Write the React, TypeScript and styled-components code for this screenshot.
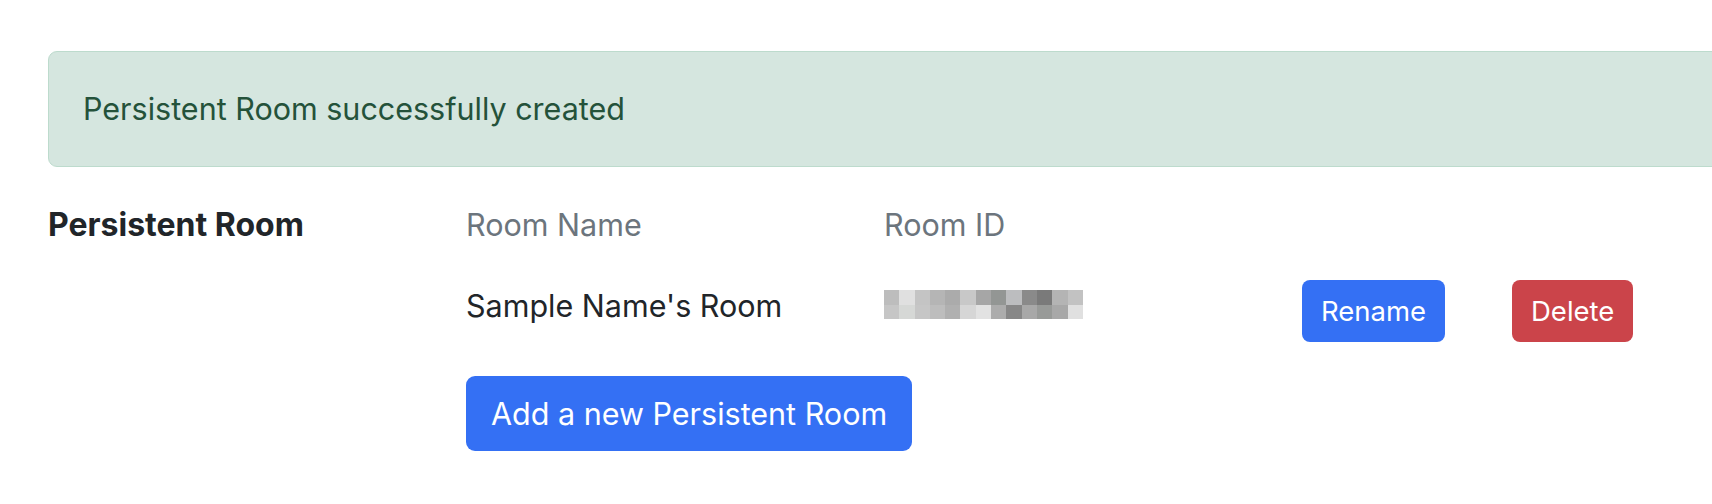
import React from "react";
import styled, { createGlobalStyle } from "styled-components";

const GlobalStyle = createGlobalStyle`
  html, body {
    margin: 0;
    padding: 0;
    background: #ffffff;
    overflow: hidden;
  }
  body {
    font-family: Inter, "Noto Sans", "Liberation Sans", sans-serif;
    color: #212529;
  }
`;

const Page = styled.div`
  width: 2000px;
  padding: 51px 0 0 48px;
  box-sizing: border-box;
`;

const Alert = styled.div`
  box-sizing: border-box;
  height: 116px;
  display: flex;
  align-items: center;
  padding: 0 34px;
  background: #d5e6df;
  border: 1.5px solid #bddbcd;
  border-radius: 9px;
  color: #24523a;
  font-size: 30.5px;
  line-height: 40px;
`;

const Grid = styled.div`
  display: grid;
  grid-template-columns: 418px 418px 418px 210px 210px;
  margin-top: 40px;
`;

const Label = styled.div`
  font-size: 32px;
  font-weight: 700;
  line-height: 36px;
  color: #212529;
`;

const HeadCell = styled.div`
  font-size: 30.5px;
  line-height: 36px;
  color: #6c757d;
`;

const Row = styled.div`
  display: contents;
`;

const Cell = styled.div<{ $offset?: number }>`
  margin-top: ${(p) => (p.$offset ?? 0)}px;
  font-size: 30.5px;
  line-height: 36px;
`;

const DataRow = styled.div`
  grid-column: 1 / -1;
  display: grid;
  grid-template-columns: 418px 418px 418px 210px 210px;
  margin-top: 37px;
  align-items: start;
`;

const Pixels = styled.div`
  display: grid;
  grid-template-columns: repeat(13, 15.3px);
  grid-auto-rows: 14.5px;
  width: 199px;
  margin-top: 10px;
`;

const Px = styled.span<{ $c: string }>`
  background: ${(p) => p.$c};
`;

const Button = styled.button<{ $variant: "primary" | "danger" }>`
  font-family: Inter, "Noto Sans", "Liberation Sans", sans-serif;
  font-size: 27.5px;
  line-height: 36px;
  height: 62px;
  padding: 0 19px;
  border: none;
  border-radius: 8px;
  color: #ffffff;
  background: ${(p) => (p.$variant === "primary" ? "#3470f4" : "#cb444a")};
  cursor: pointer;
`;

const AddRow = styled.div`
  grid-column: 2 / -1;
  margin-top: 34px;
`;

const LargeButton = styled.button`
  font-family: Inter, "Noto Sans", "Liberation Sans", sans-serif;
  font-size: 30.5px;
  line-height: 44px;
  height: 75px;
  padding: 0 25px;
  border: none;
  border-radius: 9px;
  color: #ffffff;
  background: #3470f4;
  cursor: pointer;
`;

const pixelColors = [
  "#bdbdbd", "#e0e0e0", "#c4c4c4", "#b5b5b5", "#ababab", "#c8c8c8", "#a6a6a6", "#939694", "#bcbdbf", "#8a8a8a", "#7a7a7a", "#b4b4b4", "#c2c2c2",
  "#c6c6c6", "#d6d8d6", "#c6c6c6", "#bdbdbd", "#b0b0b0", "#d6d6d6", "#e2e2e2", "#acacac", "#878787", "#a8a8a8", "#989a98", "#a8a8a8", "#e0e0e0",
];

export default function App() {
  return (
    <>
      <GlobalStyle />
      <Page>
        <Alert>Persistent Room successfully created</Alert>
        <Grid>
          <Row>
            <Label>Persistent Room</Label>
            <HeadCell>Room Name</HeadCell>
            <HeadCell>Room ID</HeadCell>
          </Row>
          <DataRow>
            <div />
            <Cell $offset={8}>Sample Name's Room</Cell>
            <Pixels>
              {pixelColors.map((c, i) => (
                <Px key={i} $c={c} />
              ))}
            </Pixels>
            <div>
              <Button $variant="primary">Rename</Button>
            </div>
            <div>
              <Button $variant="danger">Delete</Button>
            </div>
          </DataRow>
          <AddRow>
            <LargeButton>Add a new Persistent Room</LargeButton>
          </AddRow>
        </Grid>
      </Page>
    </>
  );
}
